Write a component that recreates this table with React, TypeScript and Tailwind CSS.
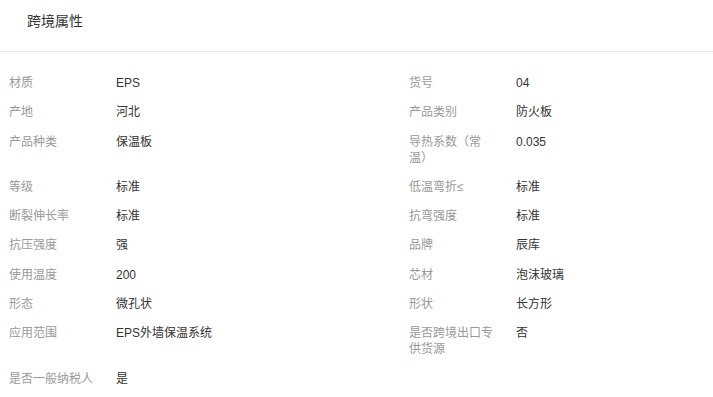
import React from "react";

const rows: [string, string][] = [
  ["材质", "EPS"],
  ["货号", "04"],
  ["产地", "河北"],
  ["产品类别", "防火板"],
  ["产品种类", "保温板"],
  ["导热系数（常温）", "0.035"],
  ["等级", "标准"],
  ["低温弯折≤", "标准"],
  ["断裂伸长率", "标准"],
  ["抗弯强度", "标准"],
  ["抗压强度", "强"],
  ["品牌", "辰库"],
  ["使用温度", "200"],
  ["芯材", "泡沫玻璃"],
  ["形态", "微孔状"],
  ["形状", "长方形"],
  ["应用范围", "EPS外墙保温系统"],
  ["是否跨境出口专供货源", "否"],
  ["是否一般纳税人", "是"],
];

export default function App() {
  return (
    <div
      className="w-[713px] h-[397px] bg-white overflow-hidden"
      style={{ fontFamily: '"Liberation Sans", Arial, "Noto Sans CJK SC", sans-serif' }}
    >
      <div className="h-[52px] border-b border-[#e8e8e8] pl-[27px] pt-[9px]">
        <span className="text-[14px] leading-[18px] text-[#333]">跨境属性</span>
      </div>
      <div className="grid grid-cols-[400px_1fr] gap-y-[13.3px] pl-[9px] pt-[23px]">
        {rows.map(([k, v], i) => (
          <div key={i} className="flex text-[12px] leading-[16px]">
            <div className="w-[90px] mr-[17px] shrink-0 text-[#999]">{k}</div>
            <div className="text-[#333]">{v}</div>
          </div>
        ))}
      </div>
    </div>
  );
}
